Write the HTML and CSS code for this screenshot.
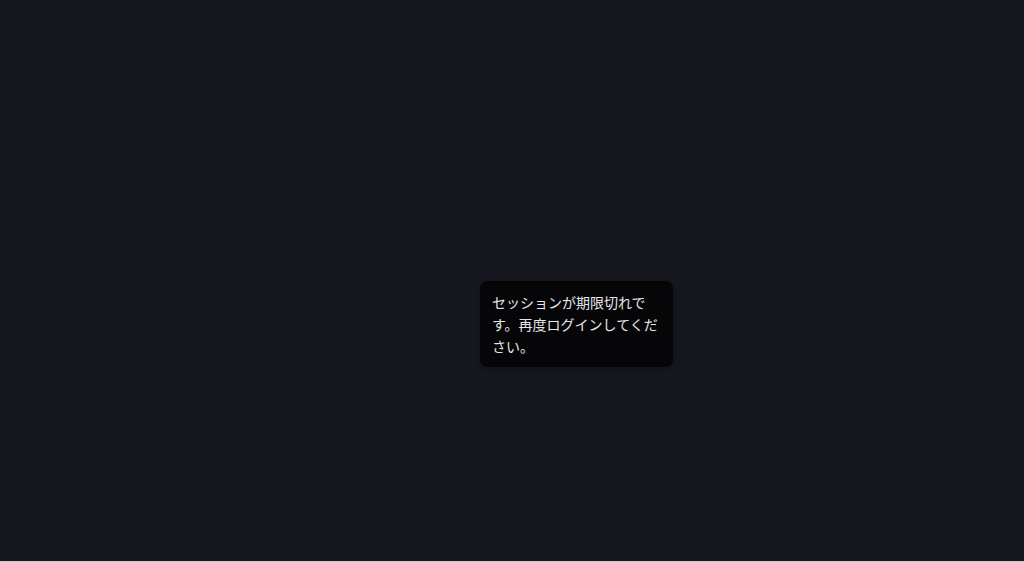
FILE: index.html
```html
<!DOCTYPE html>
<html lang="ja">
<head>
<meta charset="utf-8">
<link rel="stylesheet" href="styles.css">
</head>
<body>
<div class="screen">
  <div class="tooltip" role="tooltip">セッションが期限切れです。再度ログインしてください。</div>
</div>
</body>
</html>
```
FILE: styles.css
```css
html {
  background: #c9c9cb;
}
body {
  margin: 0;
  font-family: "Noto Sans CJK JP", "Noto Sans", sans-serif;
}
.screen {
  position: relative;
  height: 561px;
  background: #171720;
  overflow: hidden;
}
.tooltip {
  position: absolute;
  left: 480px;
  top: 281px;
  width: 169px;
  padding: 10px 12px 10px 12px;
  background: #060608;
  color: #e6e6e8;
  font-size: 14px;
  line-height: 22px;
  border-radius: 7px;
  box-shadow: 0 2px 6px rgba(0,0,0,0.25);
}
```
